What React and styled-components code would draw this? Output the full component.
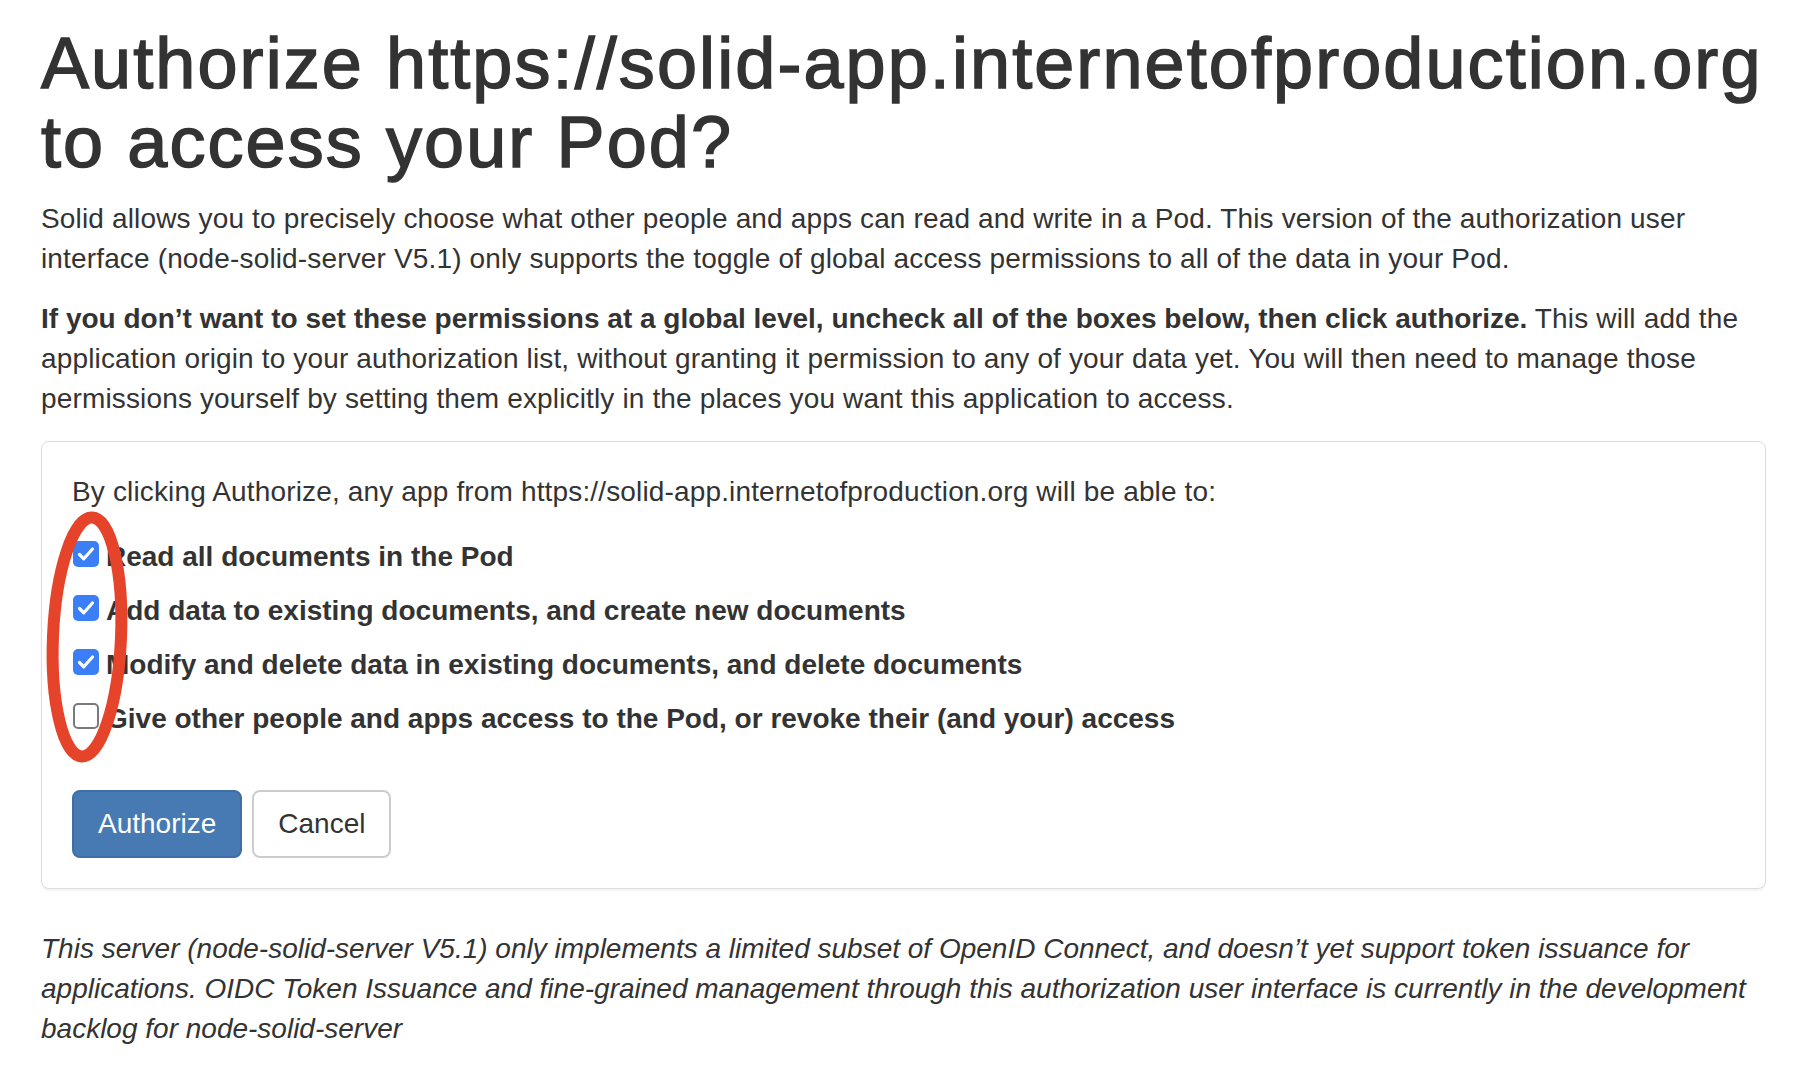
import React, { useState } from 'react';
import styled, { createGlobalStyle } from 'styled-components';

const GlobalStyle = createGlobalStyle`
  html, body {
    margin: 0;
    padding: 0;
    background: #ffffff;
  }
  body {
    font-family: 'Liberation Sans', Arial, Helvetica, sans-serif;
    color: #333333;
  }
  * {
    box-sizing: border-box;
  }
`;

const Page = styled.div`
  padding: 24px 34px 30px 41px;
`;

const Title = styled.h1`
  margin: 0 0 17px;
  font-size: 72px;
  line-height: 79px;
  font-weight: 400;
  letter-spacing: 0.029em;
  -webkit-text-stroke: 1.5px #333333;
  color: #333333;
`;

const Text = styled.p`
  margin: 0 0 ${props => props.$gap ?? 20}px;
  font-size: 28px;
  line-height: 40px;
  letter-spacing: ${props => (props.$italic ? 0 : '0.15px')};
  font-style: ${props => (props.$italic ? 'italic' : 'normal')};

  strong {
    letter-spacing: 0;
  }
`;

const Panel = styled.div`
  margin: 22px 0 40px;
  border: 1px solid #dddddd;
  border-radius: 8px;
  background: #fff;
  box-shadow: 0 2px 2px rgba(0, 0, 0, 0.05);
  padding: 30px;
`;

const PermissionList = styled.div`
  position: relative;
  margin-top: 25px;
  display: flex;
  flex-direction: column;
  gap: 14px;
`;

const Permission = styled.label`
  display: flex;
  align-items: flex-start;
  gap: 7px;
  font-size: 28px;
  line-height: 40px;
  font-weight: 700;
  cursor: pointer;
`;

const Box = styled.span`
  flex: none;
  width: 26px;
  height: 26px;
  margin: 4px 0 0 1px;
  border-radius: 5px;
  display: flex;
  align-items: center;
  justify-content: center;
  background: ${props => (props.$checked ? '#3b7ef5' : '#ffffff')};
  border: ${props => (props.$checked ? 'none' : '2px solid #7a7a7a')};
`;

const Marker = styled.svg`
  position: absolute;
  left: -40px;
  top: -40px;
  width: 120px;
  height: 290px;
  overflow: visible;
  pointer-events: none;
`;

const Actions = styled.div`
  display: flex;
  gap: 10px;
  margin-top: 51px;
`;

const Button = styled.button`
  height: 68px;
  padding: 0 24px;
  font-family: 'Liberation Sans', Arial, Helvetica, sans-serif;
  font-size: 28px;
  border-radius: 8px;
  border: 2px solid ${props => (props.$primary ? '#3f6ea6' : '#cccccc')};
  background: ${props => (props.$primary ? '#477ab3' : '#ffffff')};
  color: ${props => (props.$primary ? '#ffffff' : '#333333')};
  cursor: pointer;
`;

const Check = ({ checked }) => (
  <Box $checked={checked}>
    {checked && (
      <svg width="26" height="26" viewBox="0 0 26 26">
        <path d="M6.5 13.5 L10.8 17.8 L19.5 8" fill="none" stroke="#ffffff" strokeWidth="3.2" strokeLinecap="round" strokeLinejoin="round" />
      </svg>
    )}
  </Box>
);

const permissions = [
  { key: 'read', label: 'Read all documents in the Pod', checked: true },
  { key: 'append', label: 'Add data to existing documents, and create new documents', checked: true },
  { key: 'write', label: 'Modify and delete data in existing documents, and delete documents', checked: true },
  { key: 'control', label: 'Give other people and apps access to the Pod, or revoke their (and your) access', checked: false },
];

const App = () => {
  const [state, setState] = useState(
    Object.fromEntries(permissions.map(p => [p.key, p.checked]))
  );

  const toggle = key => setState(prev => ({ ...prev, [key]: !prev[key] }));

  return (
    <Page>
      <GlobalStyle />
      <Title>Authorize https://solid-app.internetofproduction.org to access your Pod?</Title>
      <Text>
        Solid allows you to precisely choose what other people and apps can read and write in a Pod. This version of the authorization user interface (node-solid-server V5.1) only supports the toggle of global access permissions to all of the data in your Pod.
      </Text>
      <Text $gap={0}>
        <strong>If you don’t want to set these permissions at a global level, uncheck all of the boxes below, then click authorize.</strong> This will add the application origin to your authorization list, without granting it permission to any of your data yet. You will then need to manage those permissions yourself by setting them explicitly in the places you want this application to access.
      </Text>

      <Panel>
        <Text $gap={0}>
          By clicking Authorize, any app from https://solid-app.internetofproduction.org will be able to:
        </Text>
        <PermissionList>
          {permissions.map(p => (
            <Permission key={p.key} onClick={() => toggle(p.key)}>
              <Check checked={state[p.key]} />
              <span>{p.label}</span>
            </Permission>
          ))}
          <Marker viewBox="0 0 120 290">
            <ellipse cx="55" cy="140" rx="34" ry="119.5" fill="none" stroke="#e5432a" strokeWidth="12" transform="rotate(2.5 55 140)" />
          </Marker>
        </PermissionList>
        <Actions>
          <Button $primary>Authorize</Button>
          <Button>Cancel</Button>
        </Actions>
      </Panel>

      <Text $italic>
        This server (node-solid-server V5.1) only implements a limited subset of OpenID Connect, and doesn’t yet support token issuance for applications. OIDC Token Issuance and fine-grained management through this authorization user interface is currently in the development backlog for node-solid-server
      </Text>
    </Page>
  );
};

export default App;
